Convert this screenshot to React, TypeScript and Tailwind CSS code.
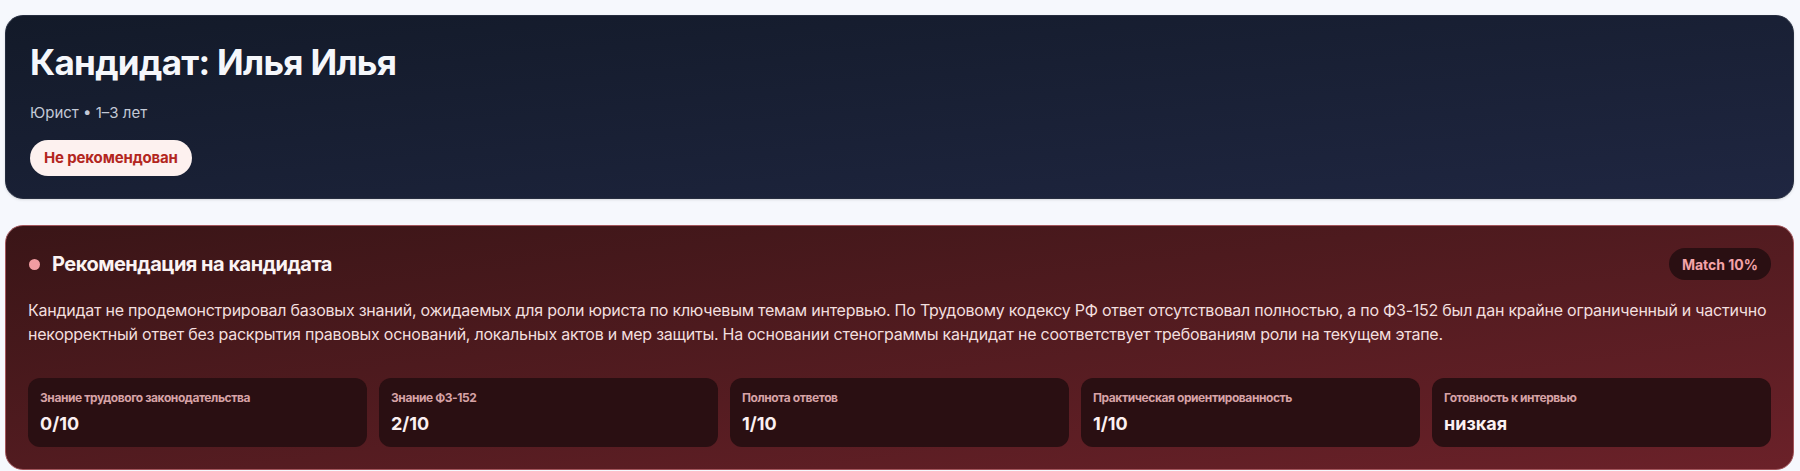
const metrics = [
  { label: "Знание трудового законодательства", value: "0/10" },
  { label: "Знание ФЗ-152", value: "2/10" },
  { label: "Полнота ответов", value: "1/10" },
  { label: "Практическая ориентированность", value: "1/10" },
  { label: "Готовность к интервью", value: "низкая" },
];

const summary =
  "Кандидат не продемонстрировал базовых знаний, ожидаемых для роли юриста по ключевым темам интервью. По Трудовому кодексу РФ ответ отсутствовал полностью, а по ФЗ-152 был дан крайне ограниченный и частично некорректный ответ без раскрытия правовых оснований, локальных актов и мер защиты. На основании стенограммы кандидат не соответствует требованиям роли на текущем этапе.";

function CandidateHeader() {
  return (
    <div className="rounded-[18px] border border-[#262d3f] bg-gradient-to-br from-[#131a29] to-[#1f2641] px-6 pt-[25px] pb-[22px] shadow-sm">
      <h1 className="text-[35px] font-bold leading-[42px] tracking-[-0.02em] text-[#f5f7fb]">
        Кандидат: Илья Илья
      </h1>
      <p className="mt-[18px] text-[15px] leading-6 text-[#c3c9d6]">Юрист • 1–3 лет</p>
      <span className="mt-[15px] inline-flex h-9 items-center rounded-full bg-[#fdf1ef] px-[14px] text-[15px] font-bold tracking-[-0.01em] text-[#b3261e]">
        Не рекомендован
      </span>
    </div>
  );
}

function MetricCard({ label, value }: { label: string; value: string }) {
  return (
    <div className="rounded-xl bg-[#2a0f12] px-3 pt-3 pb-[11px]">
      <div className="text-[12px] font-bold leading-4 tracking-[-0.035em] text-[#d6a2a6]">{label}</div>
      <div className="mt-[6px] text-[18px] font-bold leading-6 text-[#fbf0f1]">{value}</div>
    </div>
  );
}

function Recommendation() {
  return (
    <div className="mt-[26px] rounded-[18px] border border-[#a2555b] bg-gradient-to-br from-[#3a1517] to-[#6b2129] p-[22px]">
      <div className="flex h-8 items-center justify-between">
        <div className="flex items-center gap-3">
          <span className="ml-[1px] h-[11px] w-[11px] rounded-full bg-[#f19ca2]" />
          <h2 className="text-[20px] font-bold tracking-[-0.025em] text-[#fbf3f3]">
            Рекомендация на кандидата
          </h2>
        </div>
        <span className="inline-flex h-8 items-center rounded-full bg-[#2a0f12] px-[13px] text-[14px] font-bold text-[#f4a3a8]">
          Match 10%
        </span>
      </div>
      <p className="mt-[18px] text-[16px] leading-6 tracking-[-0.015em] text-[#f2dfdf]">{summary}</p>
      <div className="mt-8 grid grid-cols-5 gap-3">
        {metrics.map((m) => (
          <MetricCard key={m.label} label={m.label} value={m.value} />
        ))}
      </div>
    </div>
  );
}

export default function App() {
  return (
    <div className="min-h-screen bg-[#f6f8fd] pl-[5px] pr-[6px] pt-[15px] font-['Inter',sans-serif]">
      <CandidateHeader />
      <Recommendation />
    </div>
  );
}
